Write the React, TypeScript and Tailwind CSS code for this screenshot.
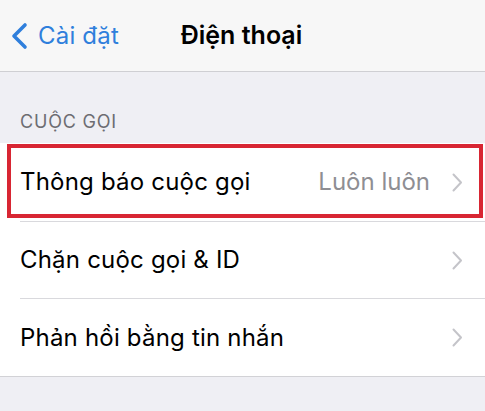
import React from "react";

const Chevron = () => (
  <svg width="11" height="19" viewBox="0 0 11 19" className="shrink-0">
    <path d="M1.5 1.5 L9 9.5 L1.5 17.5" fill="none" stroke="#c4c4c9" strokeWidth="2" strokeLinecap="round" strokeLinejoin="round" />
  </svg>
);

const Row = ({ label, value, sep, h }: { label: string; value?: string; sep: boolean; h: string }) => (
  <div className="pl-[20px]">
    <div className={`flex items-center pr-[22px] ${h} ${sep ? "border-b border-[#d9d9dd]" : ""}`}>
      <span className="flex-1 text-[24px] text-black tracking-[0.2px]">{label}</span>
      {value && <span className="text-[24px] text-[#8e8e93] mr-[22px]">{value}</span>}
      <Chevron />
    </div>
  </div>
);

export default function App() {
  return (
    <div className="w-[485px] h-[411px] bg-[#efeff4] overflow-hidden" style={{ fontFamily: "Inter, 'Noto Sans', sans-serif" }}>
      <div className="relative h-[72px] bg-[#f7f7f7] border-b border-[#cfcfd3] flex items-center">
        <div className="flex items-center pl-[10px] gap-[9px] text-[#2f7fdc]">
          <svg width="19" height="28" viewBox="0 0 19 28">
            <path d="M15 3 L4 14 L15 25" fill="none" stroke="#2f7fdc" strokeWidth="3.6" strokeLinecap="round" strokeLinejoin="round" />
          </svg>
          <span className="text-[24px] leading-none tracking-[0.2px]">Cài đặt</span>
        </div>
        <div className="absolute inset-0 flex items-center justify-center pointer-events-none">
          <span className="text-[25px] font-semibold text-black leading-none ml-[-2px]">Điện thoại</span>
        </div>
      </div>
      <div className="h-[71px] flex items-end pb-[12px] pl-[20px]">
        <span className="text-[18px] text-[#6d6d72] tracking-[0.8px] leading-none">CUỘC GỌI</span>
      </div>
      <div className="relative bg-white border-b border-[#d2d2d6]">
        <Row label="Thông báo cuộc gọi" value="Luôn luôn" sep h="h-[79px]" />
        <Row label="Chặn cuộc gọi & ID" sep h="h-[77px]" />
        <Row label="Phản hồi bằng tin nhắn" sep={false} h="h-[77px]" />
        <div className="absolute left-[7px] top-[1px] w-[476px] h-[74px] border-[4px] border-[#d82633]" />
      </div>
    </div>
  );
}
